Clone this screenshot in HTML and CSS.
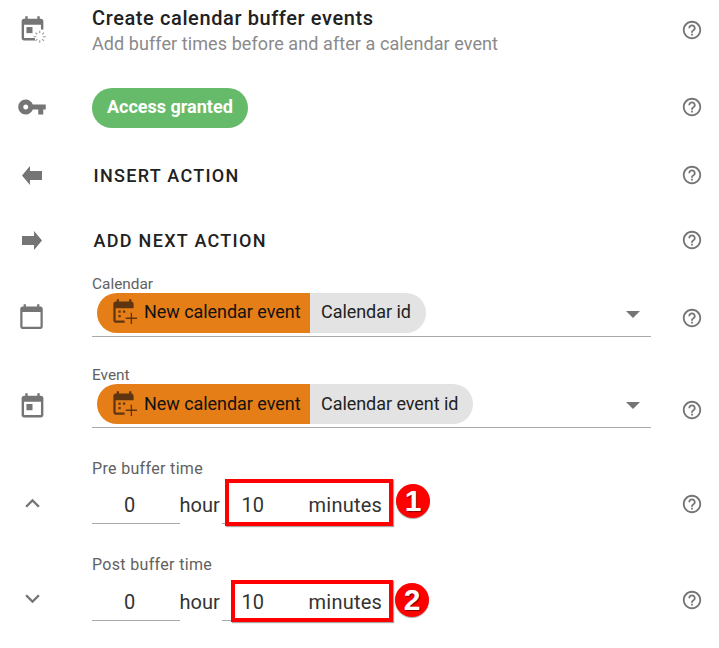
FILE: index.html
```html
<!DOCTYPE html>
<html lang="en">
<head>
<meta charset="utf-8">
<title>Create calendar buffer events</title>
<link rel="stylesheet" href="styles.css">
</head>
<body>
<main class="page">
  <section class="row row-title">
    <div class="lead">
      <svg class="ic ic-29" viewBox="0 0 24 24"><path d="M16 1v2H8V1H6v2H5c-1.11 0-1.99.9-1.99 2L3 19c0 1.1.89 2 2 2h9v-2H5V8h14v4h2V5c0-1.1-.9-2-2-2h-1V1h-2z"/><path d="M7 10h5v5H7z"/><g class="spin"><path d="M18 13v2.2M18 20.8V23M13 18h2.2M20.8 18H23M14.5 14.5l1.5 1.5M20 20l1.5 1.5M14.5 21.5l1.5-1.5M20 16l1.5-1.5"/></g></svg>
    </div>
    <div class="body">
      <h1 class="title">Create calendar buffer events</h1>
      <p class="subtitle">Add buffer times before and after a calendar event</p>
    </div>
    <div class="help"><svg class="ic ic-22" viewBox="0 0 24 24"><path d="M11 18h2v-2h-2v2zm1-16C6.48 2 2 6.48 2 12s4.48 10 10 10 10-4.48 10-10S17.52 2 12 2zm0 18c-4.41 0-8-3.59-8-8s3.59-8 8-8 8 3.59 8 8-3.59 8-8 8zm0-14c-2.21 0-4 1.79-4 4h2c0-1.1.9-2 2-2s2 .9 2 2c0 2-3 1.75-3 5h2c0-2.25 3-2.5 3-5 0-2.21-1.79-4-4-4z"/></svg></div>
  </section>

  <section class="row row-access">
    <div class="lead">
      <svg class="ic ic-30" viewBox="0 0 24 24"><path d="M12.65 10C11.83 7.67 9.61 6 7 6c-3.31 0-6 2.69-6 6s2.69 6 6 6c2.61 0 4.83-1.67 5.65-4H17v4h4v-4h2v-4H12.65zM7 14c-1.1 0-2-.9-2-2s.9-2 2-2 2 .9 2 2-.9 2-2 2z"/></svg>
    </div>
    <div class="body"><span class="granted">Access granted</span></div>
    <div class="help"><svg class="ic ic-22" viewBox="0 0 24 24"><path d="M11 18h2v-2h-2v2zm1-16C6.48 2 2 6.48 2 12s4.48 10 10 10 10-4.48 10-10S17.52 2 12 2zm0 18c-4.41 0-8-3.59-8-8s3.59-8 8-8 8 3.59 8 8-3.59 8-8 8zm0-14c-2.21 0-4 1.79-4 4h2c0-1.1.9-2 2-2s2 .9 2 2c0 2-3 1.75-3 5h2c0-2.25 3-2.5 3-5 0-2.21-1.79-4-4-4z"/></svg></div>
  </section>

  <section class="row row-action row-insert">
    <div class="lead">
      <svg class="ic ic-arrow" viewBox="0 0 20 19"><path d="M0 9.5 8 0v5h12v9H8v5z"/></svg>
    </div>
    <div class="body"><span class="action">INSERT ACTION</span></div>
    <div class="help"><svg class="ic ic-22" viewBox="0 0 24 24"><path d="M11 18h2v-2h-2v2zm1-16C6.48 2 2 6.48 2 12s4.48 10 10 10 10-4.48 10-10S17.52 2 12 2zm0 18c-4.41 0-8-3.59-8-8s3.59-8 8-8 8 3.59 8 8-3.59 8-8 8zm0-14c-2.21 0-4 1.79-4 4h2c0-1.1.9-2 2-2s2 .9 2 2c0 2-3 1.75-3 5h2c0-2.25 3-2.5 3-5 0-2.21-1.79-4-4-4z"/></svg></div>
  </section>

  <section class="row row-action">
    <div class="lead">
      <svg class="ic ic-arrow" viewBox="0 0 20 19"><path d="M20 9.5 12 0v5H0v9h12v5z"/></svg>
    </div>
    <div class="body"><span class="action">ADD NEXT ACTION</span></div>
    <div class="help"><svg class="ic ic-22" viewBox="0 0 24 24"><path d="M11 18h2v-2h-2v2zm1-16C6.48 2 2 6.48 2 12s4.48 10 10 10 10-4.48 10-10S17.52 2 12 2zm0 18c-4.41 0-8-3.59-8-8s3.59-8 8-8 8 3.59 8 8-3.59 8-8 8zm0-14c-2.21 0-4 1.79-4 4h2c0-1.1.9-2 2-2s2 .9 2 2c0 2-3 1.75-3 5h2c0-2.25 3-2.5 3-5 0-2.21-1.79-4-4-4z"/></svg></div>
  </section>

  <section class="row row-field row-calendar">
    <div class="lead">
      <svg class="ic ic-27" viewBox="0 0 24 24"><path d="M20 3h-1V1h-2v2H7V1H5v2H4c-1.1 0-2 .9-2 2v16c0 1.1.9 2 2 2h16c1.1 0 2-.9 2-2V5c0-1.1-.9-2-2-2zm0 18H4V8h16v13z"/></svg>
    </div>
    <div class="body">
      <label class="label">Calendar</label>
      <div class="select">
        <span class="tag-source"><svg class="tag-icon" viewBox="0 0 24 24"><path d="M17 1v2H8V1H6v2H5C3.9 3 3 3.9 3 5v15c0 1.1.9 2 2 2h8v-2H5V9h16V5c0-1.1-.9-2-2-2V1zM7.5 11h2v2h-2zM11.5 11h2v2h-2zM7.5 15h2v2h-2z"/><path class="plus" d="M19 13v10M14 18h10"/></svg>New calendar event</span><span class="tag-field">Calendar id</span>
        <span class="caret"></span>
      </div>
    </div>
    <div class="help"><svg class="ic ic-22" viewBox="0 0 24 24"><path d="M11 18h2v-2h-2v2zm1-16C6.48 2 2 6.48 2 12s4.48 10 10 10 10-4.48 10-10S17.52 2 12 2zm0 18c-4.41 0-8-3.59-8-8s3.59-8 8-8 8 3.59 8 8-3.59 8-8 8zm0-14c-2.21 0-4 1.79-4 4h2c0-1.1.9-2 2-2s2 .9 2 2c0 2-3 1.75-3 5h2c0-2.25 3-2.5 3-5 0-2.21-1.79-4-4-4z"/></svg></div>
  </section>

  <section class="row row-field row-event">
    <div class="lead">
      <svg class="ic ic-29" viewBox="0 0 24 24"><path d="M7 10h5v5H7zM16 1v2H8V1H6v2H5c-1.11 0-1.99.9-1.99 2L3 19c0 1.1.89 2 2 2h14c1.1 0 2-.9 2-2V5c0-1.1-.9-2-2-2h-1V1h-2zm3 18H5V8h14v11z"/></svg>
    </div>
    <div class="body">
      <label class="label">Event</label>
      <div class="select">
        <span class="tag-source"><svg class="tag-icon" viewBox="0 0 24 24"><path d="M17 1v2H8V1H6v2H5C3.9 3 3 3.9 3 5v15c0 1.1.9 2 2 2h8v-2H5V9h16V5c0-1.1-.9-2-2-2V1zM7.5 11h2v2h-2zM11.5 11h2v2h-2zM7.5 15h2v2h-2z"/><path class="plus" d="M19 13v10M14 18h10"/></svg>New calendar event</span><span class="tag-field">Calendar event id</span>
        <span class="caret"></span>
      </div>
    </div>
    <div class="help"><svg class="ic ic-22" viewBox="0 0 24 24"><path d="M11 18h2v-2h-2v2zm1-16C6.48 2 2 6.48 2 12s4.48 10 10 10 10-4.48 10-10S17.52 2 12 2zm0 18c-4.41 0-8-3.59-8-8s3.59-8 8-8 8 3.59 8 8-3.59 8-8 8zm0-14c-2.21 0-4 1.79-4 4h2c0-1.1.9-2 2-2s2 .9 2 2c0 2-3 1.75-3 5h2c0-2.25 3-2.5 3-5 0-2.21-1.79-4-4-4z"/></svg></div>
  </section>

  <section class="row row-time row-pre">
    <div class="lead">
      <svg class="ic ic-29" viewBox="0 0 24 24"><path d="M12 8l-6 6 1.41 1.41L12 10.83l4.59 4.58L18 14z"/></svg>
    </div>
    <div class="body">
      <label class="label label-time">Pre buffer time</label>
      <div class="time">
        <span class="num">0</span><span class="unit">hour</span>
        <span class="num num-min"><span>10</span><span class="unit-min">minutes</span></span>
      </div>
      <div class="mark mark-one"></div>
      <div class="badge badge-one">1</div>
    </div>
    <div class="help"><svg class="ic ic-22" viewBox="0 0 24 24"><path d="M11 18h2v-2h-2v2zm1-16C6.48 2 2 6.48 2 12s4.48 10 10 10 10-4.48 10-10S17.52 2 12 2zm0 18c-4.41 0-8-3.59-8-8s3.59-8 8-8 8 3.59 8 8-3.59 8-8 8zm0-14c-2.21 0-4 1.79-4 4h2c0-1.1.9-2 2-2s2 .9 2 2c0 2-3 1.75-3 5h2c0-2.25 3-2.5 3-5 0-2.21-1.79-4-4-4z"/></svg></div>
  </section>

  <section class="row row-time row-post">
    <div class="lead">
      <svg class="ic ic-29" viewBox="0 0 24 24"><path d="M16.59 8.59 12 13.17 7.41 8.59 6 10l6 6 6-6z"/></svg>
    </div>
    <div class="body">
      <label class="label label-time">Post buffer time</label>
      <div class="time">
        <span class="num">0</span><span class="unit">hour</span>
        <span class="num num-min"><span>10</span><span class="unit-min">minutes</span></span>
      </div>
      <div class="mark mark-two"></div>
      <div class="badge badge-two">2</div>
    </div>
    <div class="help"><svg class="ic ic-22" viewBox="0 0 24 24"><path d="M11 18h2v-2h-2v2zm1-16C6.48 2 2 6.48 2 12s4.48 10 10 10 10-4.48 10-10S17.52 2 12 2zm0 18c-4.41 0-8-3.59-8-8s3.59-8 8-8 8 3.59 8 8-3.59 8-8 8zm0-14c-2.21 0-4 1.79-4 4h2c0-1.1.9-2 2-2s2 .9 2 2c0 2-3 1.75-3 5h2c0-2.25 3-2.5 3-5 0-2.21-1.79-4-4-4z"/></svg></div>
  </section>
</main>
</body>
</html>
```

FILE: styles.css
```css
* { box-sizing: border-box; }
html, body { margin: 0; padding: 0; background: #fff; overflow: hidden; }
body { font-family: Roboto, "Liberation Sans", sans-serif; color: #212121; }
.page { width: 719px; height: 648px; display: flex; flex-direction: column; }

.row { display: flex; width: 719px; flex: none; }
.lead { width: 92px; flex: none; display: flex; justify-content: flex-start; padding-left: 18px; }
.body { width: 559px; flex: none; position: relative; }
.help { width: 68px; flex: none; display: flex; justify-content: center; padding-left: 13px; }

.ic { display: block; fill: #757575; flex: none; }
.ic-22 { width: 22px; height: 22px; }
.ic-27 { width: 27px; height: 27px; }
.ic-29 { width: 29px; height: 29px; }
.ic-30 { width: 30px; height: 30px; }
.ic-arrow { width: 20px; height: 19px; }
.spin path { fill: none; stroke: #999; stroke-width: .9; }

.row-title { height: 60px; align-items: center; }
.row-title .lead { padding-bottom: 2px; }
.title { margin: 0; padding-top: 1px; font-size: 20px; font-weight: 500; line-height: 26px; letter-spacing: .6px; color: #212121; }
.subtitle { margin: 0; font-size: 18px; line-height: 26px; letter-spacing: .08px; color: #8a8a8a; }

.row-access { margin-top: 28px; height: 40px; align-items: center; }
.row-access .lead { padding-left: 17px; padding-bottom: 2px; }
.row-access .help, .row-action .help { padding-bottom: 2px; }
.granted { display: inline-flex; align-items: center; height: 40px; padding: 0 15px 4px; border-radius: 20px; background: #66bb6a; color: #fff; font-size: 18px; font-weight: 700; }

.row-action { height: 65px; align-items: center; }
.row-insert { margin-top: 15px; }
.row-action .lead { padding-left: 22px; padding-bottom: 1px; }
.action { padding-left: 1.5px; font-size: 18px; font-weight: 500; letter-spacing: 1.3px; color: #212121; }

.row-field { height: 61px; align-items: flex-end; }
.row-calendar { margin-top: 3px; }
.row-event { margin-top: 30px; }
.row-field .lead { padding-bottom: 7px; padding-left: 18px; }
.row-calendar .help { padding-bottom: 8px; }
.row-event .help { padding-bottom: 7px; }
.label { display: block; font-size: 15.4px; line-height: 16px; color: #616161; }
.select { position: relative; height: 45px; padding: 1px 0 0 5px; border-bottom: 1px solid #aaa; display: flex; align-items: flex-start; }
.tag-source { display: inline-flex; align-items: center; height: 40px; padding: 0 0 3px 13px; width: 213px; background: #e67e17; border-radius: 20px 0 0 20px; color: #111; font-size: 18px; letter-spacing: -.05px; white-space: nowrap; }
.tag-icon { width: 27px; height: 27px; margin-right: 7px; flex: none; fill: #5e3510; }
.tag-icon .plus { fill: none; stroke: #5e3510; stroke-width: 1.2; }
.tag-field { display: inline-flex; align-items: center; height: 40px; padding: 0 15px 3px 11px; background: #e3e3e3; border-radius: 0 20px 20px 0; color: #212121; font-size: 18px; letter-spacing: -.05px; white-space: nowrap; }
.row-event .tag-source, .row-event .tag-field { padding-bottom: 1px; }
.caret { position: absolute; right: 11px; top: 19px; width: 0; height: 0; border-left: 7px solid transparent; border-right: 7px solid transparent; border-top: 7px solid #757575; }

.row-time { align-items: flex-end; }
.row-pre { margin-top: 32px; height: 64px; }
.row-post { margin-top: 32px; height: 65px; }
.row-time .lead { padding-left: 18px; padding-bottom: 6px; }
.row-pre .help { padding-bottom: 9px; }
.row-post .help { padding-bottom: 10px; }
.row-post .lead { padding-bottom: 8px; }
.label-time { margin-bottom: 8px; padding-top: 1px; font-size: 16px; letter-spacing: .33px; }
.row-pre .label-time { margin-bottom: 7px; padding-top: 2px; }
.time { display: flex; align-items: flex-end; height: 40px; font-size: 20px; color: #333; }
.num { display: block; width: 88px; height: 40px; padding: 9px 0 0 32px; border-bottom: 1px solid #aaa; line-height: 24px; }
.unit { width: 42px; height: 40px; padding-top: 9px; line-height: 24px; margin-left: -.5px; }
.num-min { width: 170px; padding-left: 20px; display: flex; }
.unit-min { margin-left: 44.5px; letter-spacing: .25px; }

.mark { position: absolute; border: 4px solid #f00; box-shadow: 1px 1px 1px rgba(0,0,0,.35); }
.mark-one { left: 133px; top: 20px; width: 168px; height: 47px; }
.mark-two { left: 139px; top: 24px; width: 162px; height: 42px; }
.badge { position: absolute; width: 34px; height: 34px; border-radius: 50%; background: #f00; color: #fff; font-family: "Liberation Sans", sans-serif; font-weight: 700; font-size: 30px; line-height: 34px; text-align: center; text-shadow: 1px 1px 1px rgba(0,0,0,.5); box-shadow: 0 1px 1px rgba(0,0,0,.35); }
.badge-one { left: 304px; top: 25px; }
.badge-two { left: 303px; top: 27px; }
```
